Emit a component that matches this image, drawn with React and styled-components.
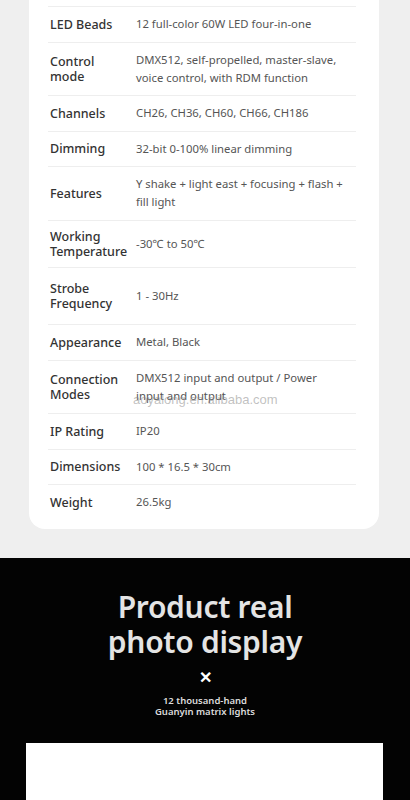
import React from "react";
import styled, { createGlobalStyle } from "styled-components";

const Global = createGlobalStyle`
  html, body { margin: 0; padding: 0; background: #efefef; }
  body { font-family: "Noto Sans", "Open Sans", sans-serif; width: 410px; overflow: hidden; }
`;

const Page = styled.div`
  width: 410px;
  height: 800px;
  overflow: hidden;
  background: #efefef;
  display: flex;
  flex-direction: column;
`;

const Card = styled.div`
  position: relative;
  margin: 0 31px 0 29px;
  padding: 6px 23px 0 19px;
  background: #ffffff;
  border-radius: 0 0 16px 16px;
`;

const Row = styled.div`
  display: grid;
  grid-template-columns: 80px 1fr;
  column-gap: 6px;
  align-items: center;
  padding: ${(p) => (p.$tall ? "13px" : "8.25px")} 13px
    ${(p) => (p.$last ? "17.75px" : p.$tall ? "13px" : "8.25px")} 2px;
  border-top: 1px solid #eeeeee;
`;

const Label = styled.div`
  font-size: 12.5px;
  font-weight: 500;
  line-height: 15px;
  color: #333333;
`;

const Value = styled.div`
  font-size: 11.3px;
  font-weight: 400;
  line-height: 18px;
  color: #555555;
`;

const Watermark = styled.div`
  position: absolute;
  left: 104px;
  top: 392px;
  font-family: "Liberation Sans", Arial, sans-serif;
  font-size: 13px;
  color: rgba(140, 140, 140, 0.55);
  pointer-events: none;
`;

const Dark = styled.section`
  margin-top: 29px;
  background: #030303;
  flex: 1;
  display: flex;
  flex-direction: column;
  align-items: center;
  padding-top: 31px;
`;

const Title = styled.h2`
  margin: 0;
  font-size: 30px;
  line-height: 35px;
  font-weight: 600;
  color: #e4e4e4;
  text-align: center;
  letter-spacing: -0.3px;
`;

const Cross = styled.div`
  margin-top: 9px;
  font-size: 16px;
  line-height: 18px;
  font-weight: 700;
  color: #ffffff;
`;

const Sub = styled.p`
  margin: 9px 0 0;
  font-size: 9.5px;
  line-height: 11px;
  font-weight: 600;
  color: #dcdcdc;
  text-align: center;
`;

const Photo = styled.div`
  align-self: stretch;
  margin: 26px 27px 0 26px;
  background: #ffffff;
  flex: 1;
`;

const specs = [
  ["LED Beads", "12 full-color 60W LED four-in-one"],
  ["Control mode", "DMX512, self-propelled, master-slave, voice control, with RDM function"],
  ["Channels", "CH26, CH36, CH60, CH66, CH186"],
  ["Dimming", "32-bit 0-100% linear dimming"],
  ["Features", "Y shake + light east + focusing + flash + fill light"],
  ["Working Temperature", "-30℃ to 50℃"],
  ["Strobe Frequency", "1 - 30Hz", true],
  ["Appearance", "Metal, Black"],
  ["Connection Modes", "DMX512 input and output / Power input and output"],
  ["IP Rating", "IP20"],
  ["Dimensions", "100 * 16.5 * 30cm"],
  ["Weight", "26.5kg"],
];

export default function App() {
  return (
    <Page>
      <Global />
      <Card>
        {specs.map(([k, v, tall], i) => (
          <Row key={k} $tall={tall} $last={i === specs.length - 1}>
            <Label>{k}</Label>
            <Value>{v}</Value>
          </Row>
        ))}
        <Watermark>aoyalong.en.alibaba.com</Watermark>
      </Card>
      <Dark>
        <Title>
          Product real
          <br />
          photo display
        </Title>
        <Cross>✕</Cross>
        <Sub>
          12 thousand-hand
          <br />
          Guanyin matrix lights
        </Sub>
        <Photo />
      </Dark>
    </Page>
  );
}
